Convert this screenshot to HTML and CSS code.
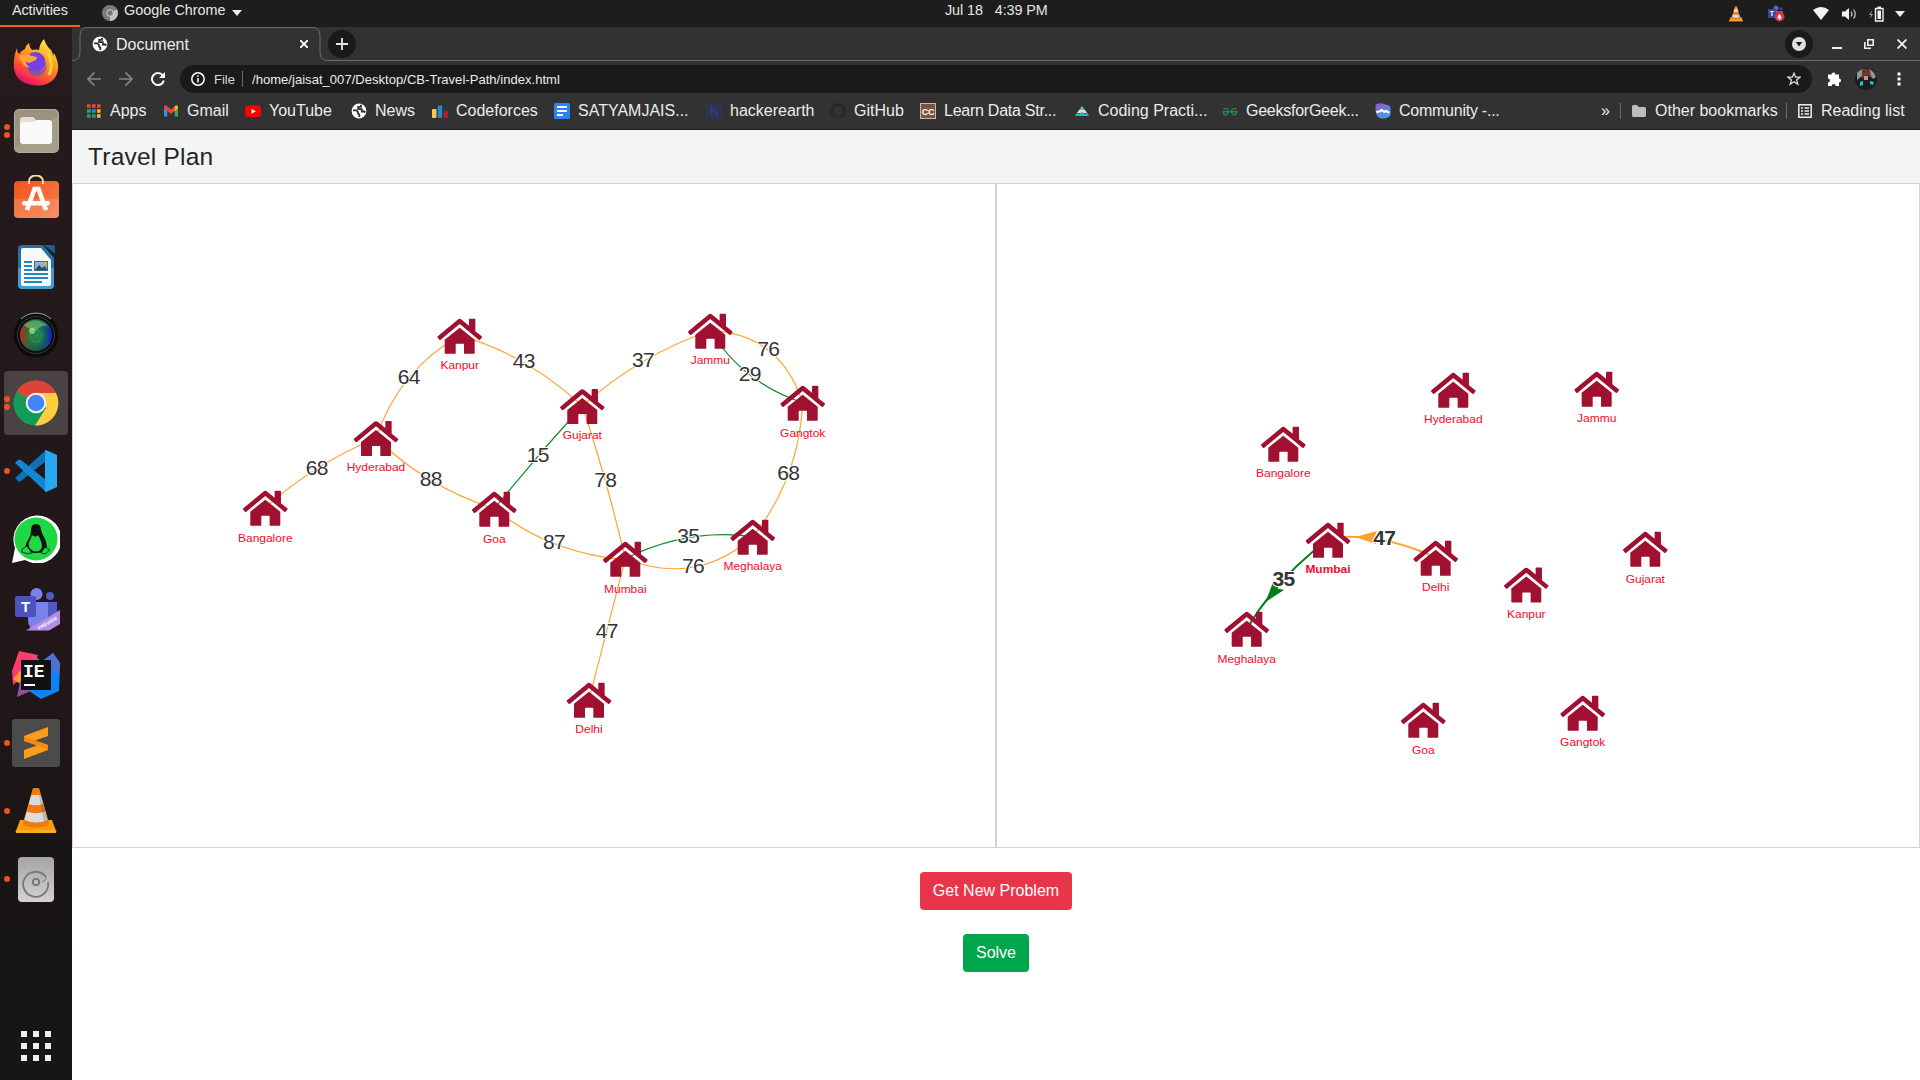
FILE: index.html
```html
<!DOCTYPE html>
<html lang="en">
<head>
<meta charset="utf-8">
<title>Document</title>
<link rel="stylesheet" href="styles.css">
</head>
<body>
<svg class="defs" aria-hidden="true">
  <defs>
    <symbol id="globe" viewBox="0 0 16 16"><circle cx="8" cy="8" r="7.4" fill="#fff"/><path d="M2 7.300h3.500L7 9v1.500l1.300 1V14M10 1.800v2H7.200V6.200h3.600v2.300h2.500l1 1" fill="none" stroke="#323232" stroke-width="1.800"/></symbol>
    <symbol id="cone" viewBox="0 0 48 48"><path d="M8 33h32l4 11q.5 2-1.5 2h-37q-2 0-1.5-2z" fill="#ff9a10"/><path d="M4 43h40l.3 1.500q0 1.500-1.800 1.500h-37q-2 0-1.800-1.500z" fill="#f7b01c"/><path d="M22 1h4q1 0 1.400 1L37 36q0 4.500-13 4.500T11 36L20.600 2q.4-1 1.400-1z" fill="#ee7a10"/><path d="M19.400 8h9.200l2.600 9q-7 2.500-14.400 0zM14.800 24.500q9 3.500 18.400 0L35.600 33q-11 5-23.200 0z" fill="#dcdcdc"/><path d="M27 8h1.600L35.600 33l-4 1.500z" fill="#555" opacity=".25"/></symbol>
    <symbol id="house" viewBox="-68 -2 136 110" overflow="visible"><path d="M-66 53-6 3Q0-2 6 3L28 21V2q0-2 2-2h15q2 0 2 2v36l19 15q2 2 0 4l-5 6q-2 2-4 0L0 16-57 63q-2 2-4 0l-5-6q-2-2 0-4zM0 27l45 36v40q0 2-2 2H13V77q0-2-2-2h-21q-2 0-2 2v28h-31q-2 0-2-2V63z" fill="#a01030"/></symbol>
    <linearGradient id="gFox" x1=".8" y1="0" x2=".3" y2="1"><stop offset="0" stop-color="#fff44f"/><stop offset=".4" stop-color="#ffa020"/><stop offset=".75" stop-color="#ff4638"/><stop offset="1" stop-color="#e5057c"/></linearGradient>
    <linearGradient id="gOr" x1="0" y1="0" x2="1" y2="1"><stop offset="0" stop-color="#f2521b"/><stop offset="1" stop-color="#f58350"/></linearGradient>
    <radialGradient id="gLens"><stop offset="0" stop-color="#1fa04a"/><stop offset=".55" stop-color="#1c6a50"/><stop offset="1" stop-color="#1a3a4c"/></radialGradient>
    <linearGradient id="gLens2"><stop offset="0" stop-color="#c8241c"/><stop offset=".3" stop-color="#2c7a2e" stop-opacity=".6"/><stop offset=".65" stop-color="#147a58" stop-opacity=".3"/><stop offset="1" stop-color="#0c1cd0"/></linearGradient>
    <linearGradient id="gDisk" x1="0" y1="0" x2="0" y2="1"><stop offset="0" stop-color="#a4a4a4"/><stop offset="1" stop-color="#d2d2d2"/></linearGradient>
    <linearGradient id="gCom" x1="0" y1="0" x2=".6" y2="1"><stop offset="0" stop-color="#9b4fd0"/><stop offset="1" stop-color="#3ca0e8"/></linearGradient>
  </defs>
</svg>

<header class="topbar">
  <div class="activities">Activities</div>
  <div class="appmenu">
    <svg width="16" height="16" viewBox="0 0 16 16"><circle cx="8" cy="8" r="8" fill="#7b7b7b"/><path d="M8 8 15 4.200A8 8 0 0 1 8 16z" fill="#c2c2c2"/><circle cx="8" cy="8" r="3.300" fill="#777" stroke="#ccc"/></svg>
    <span>Google Chrome</span>
    <svg class="caret" width="10" height="6" viewBox="0 0 10 6"><path d="M0 0h10L5 6z" fill="#eee"/></svg>
  </div>
  <div class="clock"><span>Jul 18</span><span>4:39 PM</span></div>
  <div class="tray">
    <svg width="16" height="16"><use href="#cone"/></svg>
    <svg class="t-teams" width="17" height="17" viewBox="0 0 17 17"><circle cx="8" cy="3" r="2.600" fill="#5a62c8"/><circle cx="13" cy="3.500" r="1.600" fill="#3c44a0"/><path d="M5 6h10v7H5z" fill="#5a62c8"/><rect y="4" width="8" height="9" fill="#3a43a8"/><text x="4" y="11" class="tray-t">T</text><circle cx="11.500" cy="11.500" r="5" fill="#d3304c"/><path d="M9 13.500q1-1 1-3a1.600 1.600 0 0 1 3 0q0 2 1 3zM10.800 14h1.500v1h-1.500z" fill="#fff"/></svg>
    <svg class="t-wifi" width="16" height="13" viewBox="0 0 16 13"><path d="M0 3Q8-3 16 3L8 13z" fill="#f2f2f2"/></svg>
    <svg class="t-vol" width="16" height="14" viewBox="0 0 16 14"><path d="M0 4.500h3L7 1v12L3 9.500H0z" fill="#f2f2f2"/><path d="M9 4.500q2 2.500 0 5M11.500 2.500q3.500 4.500 0 9" fill="none" stroke="#ccc" stroke-width="1.200"/></svg>
    <svg class="t-bat" width="15" height="16" viewBox="0 0 15 16"><path d="M3 4 0 9h2l-1 4 3-5H2z" fill="#999"/><path d="M6.500 2.500h7.500v12.500H6.500z" fill="none" stroke="#f2f2f2" stroke-width="1.400"/><path d="M8.500 4.500h3.500V13H8.500zM8.500.5h3.500v1.500H8.500z" fill="#f2f2f2"/></svg>
    <svg class="t-caret" width="10" height="6" viewBox="0 0 10 6"><path d="M0 0h10L5 6z" fill="#eee"/></svg>
  </div>
</header>

<div class="desktop">
  <nav class="dock">
    <div class="tile"><svg viewBox="0 0 48 48"><path d="M5 9q0 4 2 6Q10 11 13 10q1-4 4-6 0 4 3 7 4-1 7 0 1-7 5-11 2 7 7 11 2 3 2 6l1-3q5 9 4 17-3 15-20 15.500Q5 46 2 30 1 18 5 9z" fill="url(#gFox)"/><circle cx="23.500" cy="23" r="10" fill="#7a3fe0"/><path d="M14 24q4 10 14 8 6-2 5.500-9 2 5-1 10-5 6-12 3-6-4-6.500-12z" fill="#5058d0" opacity=".7"/><path d="M7 17q8-3 13 0l5 1-1 3-7 3-4-2q2 5 5 7-8-1-11-12z" fill="#ffa436"/><path d="M36 14q6 12 1 22" fill="none" stroke="#ffd040" stroke-width="3"/></svg></div>
    <div class="tile dots2"><svg viewBox="0 0 48 48"><rect x="2" y="2" width="45" height="44" rx="5" fill="#b4ad9a"/><rect x="3" y="3" width="43" height="42" rx="4" fill="#9b937f"/><path d="M3 41 46 9v32q0 4-4 4H7q-4 0-4-4z" fill="#a59e8a"/><path d="M8 13q0-3 3-3h9q3 0 4 4h14v16H8z" fill="#e2dfd8"/><path d="M8 18q0-3 3-3h10l4-2h12q3 0 3 3v18q0 3-3 3H11q-3 0-3-3z" fill="#fafafa"/></svg></div>
    <div class="tile"><svg viewBox="0 0 48 48"><rect x="2" y="6" width="45" height="37" rx="4" fill="url(#gOr)"/><path d="M2 24h45v15q0 4-4 4H6q-4 0-4-4z" fill="#fff" opacity=".12"/><path d="M17 9V6a7 5.500 0 0 1 14 0v3" fill="none" stroke="#fbd9a8" stroke-width="2"/><path d="M15 35 22.500 14h4L34 35" fill="none" stroke="#fff" stroke-width="4.500"/><rect x="10" y="26" width="28" height="4.500" rx="2" fill="#fff"/></svg></div>
    <div class="tile"><svg viewBox="0 0 48 48"><path d="M10 2h21l11 13v27q0 4-4 4H10q-4 0-4-4V6q0-4 4-4z" fill="#1f74a8"/><path d="M6 25h36v17q0 4-4 4H10q-4 0-4-4z" fill="#3f9dcb"/><path d="M11 5h18l10 12v24q0 2-2 2H11q-2 0-2-2V7q0-2 2-2z" fill="#f8f8f8"/><path d="M32 2h9q2 0 2 2v7z" fill="#1a5f90"/><path d="M12 19h8M12 23h8M12 27h8M12 31h24M12 35h24M12 39h18" stroke="#1f86c0" stroke-width="2"/><rect x="22.500" y="18.500" width="13" height="9" fill="#7fb8e0" stroke="#3a6a90"/><path d="m23 27 4-5 3 3 3-2 2 4z" fill="#444"/><path d="M31 19h4v3z" fill="#ffb400"/></svg></div>
    <div class="tile"><svg viewBox="0 0 48 48"><circle cx="24" cy="24" r="22.500" fill="#0c0c0c"/><path d="M9 8A22 22 0 0 1 39 8" fill="none" stroke="#a8a8a8" stroke-width="1"/><circle cx="24" cy="24" r="18.500" fill="none" stroke="#3a3a3a" stroke-width="1"/><circle cx="24" cy="24" r="16" fill="url(#gLens)"/><circle cx="24" cy="24" r="16" fill="url(#gLens2)"/><path d="M12 14q12-10 24 1-8-1-12 5-6-1-12-6z" fill="#8fdc7c" opacity=".5"/><circle cx="20" cy="20" r="3" fill="#d8f0b8" opacity=".6"/><circle cx="24" cy="25" r="6" fill="none" stroke="#46b85c" opacity=".5"/></svg></div>
    <div class="tile active dots2"><svg viewBox="0 0 48 48"><path d="M24 24 4.500 12.750A22.500 22.500 0 0 1 43.500 12.750z" fill="#db4437"/><path d="M24 24 4.500 12.750A22.500 22.500 0 0 0 24 46.500L34 30z" fill="#0f9d58"/><path d="M24 14h20A22.500 22.500 0 0 1 23 46.500L34 29z" fill="#ffcd40"/><path d="M4.500 12.750A22.500 22.500 0 0 1 44.200 14H24L14 29z" fill="#db4437"/><path d="M4.700 12.600 14.500 29l9.500-5z" fill="#0f9d58"/><circle cx="24" cy="24" r="10.300" fill="#f1f1f1"/><circle cx="24" cy="24" r="8.300" fill="#4285f4"/></svg></div>
    <div class="tile dot"><svg viewBox="0 0 48 48"><path d="m3 31 3 3q1.500 1 3 0L34 14V3z" fill="#0f70b3"/><path d="m3 16 3-3q1.500-1 3 0l25 20v12z" fill="#1087d0"/><path d="M34 3 45 8v32l-11 5q-1 .3-1-1V5q0-1.500 1-2z" fill="#28a8f0"/></svg></div>
    <div class="tile"><svg viewBox="0 0 48 48"><path d="M0 48 3 33A24 24 0 1 1 13 45z" fill="#fff"/><circle cx="24" cy="24" r="21.500" fill="#1fd744"/><path d="M19 15q0-6 5-6t5 6q1 4 4 9 3 7 1 12-4 2-10 2t-10-1q-2-6 2-12 3-4 3-10z" fill="#111"/><path d="M20 20q4 3 6 0 4 7 4 12-2 6-9 4-6-4-4-9 2-3 3-7z" fill="#1fd744"/><path d="m10 34 5-3 5 7q-4 2-10-1zM29 38l4-6 5 3-5 4z" fill="#1fd744" stroke="#111" stroke-width=".8"/></svg></div>
    <div class="tile"><svg viewBox="0 0 48 48"><circle cx="24.500" cy="11" r="6" fill="#7b83eb"/><circle cx="38" cy="13" r="4" fill="#5059c9"/><path d="M34 19h11v14q-1 8-9 8z" fill="#5059c9"/><path d="M16 19h20v16q-1 12-11 12-9 0-9-10z" fill="#7b83eb"/><rect x="3" y="13" width="21" height="21" rx="2" fill="#4b53bc"/><text x="13.500" y="29" class="ic-t">T</text><path d="M14 47.500 48 27v14L37 47.500z" fill="#b48ce4"/><text x="27" y="47" class="ic-prev" transform="rotate(-30 27 47)">PREVIEW</text></svg></div>
    <div class="tile"><svg viewBox="0 0 48 48"><path d="M7 0 26 4 20 20 1 34 0 20z" fill="#fe3a6e"/><path d="M1 28 10 18v16z" fill="#fc9a3a"/><path d="M8 30 5 46 28 36z" fill="#9a4c9c"/><path d="m20 3 10 8-8 4z" fill="#e05090"/><path d="m28 12 13-10 7 10-1 28-18 8-12-8z" fill="#0a84f8"/><path d="m28 12 13-10 7 10-1 12z" fill="#5070d0"/><rect x="9" y="9" width="30" height="30" fill="#111"/><text x="11" y="26" class="ic-ie">IE</text><path d="M12 33h11v2H12z" fill="#fff"/></svg></div>
    <div class="tile dot"><svg viewBox="0 0 48 48"><rect width="48" height="48" rx="3" fill="#4b4b4b"/><path d="M12 17 36 8v9l-13 4.500L36 26v5L12 40v-9l13-4.500L12 22z" fill="#ff9c1a"/><path d="m12 22 13 4.500 11 4V26l-13-4.500-11-4z" fill="#f28a0c"/></svg></div>
    <div class="tile dot"><svg viewBox="0 0 48 48"><use href="#cone"/></svg></div>
    <div class="tile dot"><svg viewBox="0 0 48 48"><rect x="6" y="2" width="36" height="45" rx="4" fill="url(#gDisk)"/><path d="M33.500 18.500A12.500 12.500 0 1 0 36 24" fill="none" stroke="#777" stroke-width="1.800" transform="translate(0 3)"/><path d="M30 27a6 6 0 0 0 4-6" fill="none" stroke="#777"/><circle cx="24" cy="27" r="3.200" fill="none" stroke="#777" stroke-width="1.800"/></svg></div>
    <svg class="grid" width="30" height="30" viewBox="0 0 30 30"><path d="M0 3h30M0 15h30M0 27h30" stroke="#f0efee" stroke-width="6" stroke-dasharray="6"/></svg>
  </nav>

  <div class="browser">
    <div class="tabstrip">
      <svg class="tabline" width="256" height="34" viewBox="0 0 256 34"><path d="M0 33.500q8 0 8-8V8.500q0-8 8-8h224q8 0 8 8v17q0 8 8 8" fill="none" stroke="#6c6c6c"/></svg>
      <div class="tab"><svg width="16" height="16"><use href="#globe"/></svg><span>Document</span><svg class="x" width="8" height="8" viewBox="0 0 8 8"><path d="m0 0 8 8M8 0 0 8" stroke="#fff" stroke-width="1.900"/></svg></div>
      <div class="round"><svg width="12" height="12" viewBox="0 0 12 12"><path d="M6 0v12M0 6h12" stroke="#e8e8e8" stroke-width="1.800"/></svg></div>
      <div class="winctl">
        <div class="round"><svg width="14" height="14" viewBox="0 0 14 14"><circle cx="7" cy="7" r="7" fill="#e0e0e0"/><path d="M3.800 5h6.400L7 9.500z" fill="#1a1a1a"/></svg></div>
        <svg class="min" width="10" height="10" viewBox="0 0 10 10"><path d="M0 9h10" stroke="#eee" stroke-width="2"/></svg>
        <svg class="res" width="10" height="10" viewBox="0 0 10 10"><path d="M3.800.8h5.400v5.400H3.800z" fill="none" stroke="#eee" stroke-width="1.600"/><path d="M.8 3v6.200H7" fill="none" stroke="#eee" stroke-width="1.600"/></svg>
        <svg class="cls" width="10" height="10" viewBox="0 0 10 10"><path d="m.5.5 9 9M9.500.5l-9 9" stroke="#eee" stroke-width="1.900"/></svg>
      </div>
    </div>
    <div class="toolbar">
      <svg class="nav" width="14" height="14" viewBox="0 0 14 14"><path d="M14 7H1M7.500.5 1 7l6.500 6.500" fill="none" stroke="#858585" stroke-width="1.700"/></svg>
      <svg class="nav" width="14" height="14" viewBox="0 0 14 14"><path d="M0 7h13M6.500.5 13 7l-6.500 6.500" fill="none" stroke="#858585" stroke-width="1.700"/></svg>
      <svg class="nav" width="14" height="14" viewBox="0 0 14 14"><path d="M11.600 3.200A6 6 0 1 0 12.800 8.500" fill="none" stroke="#fff" stroke-width="2"/><path d="M14 0v6H8z" fill="#fff"/></svg>
      <div class="omnibox">
        <svg width="14" height="14" viewBox="0 0 14 14"><circle cx="7" cy="7" r="6.200" fill="none" stroke="#fff" stroke-width="1.500"/><path d="M7 6v4.500M7 3.300v1.500" stroke="#fff" stroke-width="1.500"/></svg>
        <span class="scheme">File</span><i class="bar"></i><span class="url">/home/jaisat_007/Desktop/CB-Travel-Path/index.html</span>
        <svg class="star" width="14" height="14" viewBox="0 0 14 14"><path d="m7 1.200 1.700 4h4.300L9.600 7.900l1.200 4.400L7 9.700l-3.800 2.600 1.200-4.400L1 5.200h4.300z" fill="none" stroke="#ddd" stroke-width="1.300"/></svg>
      </div>
      <svg class="puz" width="16" height="16" viewBox="0 0 16 16"><path d="M1 3.500h3.500a2 2 0 1 1 4 0H12v4a2 2 0 1 1 0 4V15H8.700a2 2 0 1 0-4 0H1v-3.500a2 2 0 1 0 0-4z" fill="#fff"/></svg>
      <svg class="ava" width="22" height="22" viewBox="0 0 22 22"><circle cx="11" cy="11" r="11" fill="#1c1c20"/><path d="M2 5Q5 1 9 1L7 8 2 12zM14 1q5 2 7 8l-3 2-3-4z" fill="#8d969a"/><path d="M7 2q5-3 8 1l1 7-4-3-5 4z" fill="#6e3528"/><path d="M9 8h4v4H9z" fill="#b89890"/><path d="m5 14 3-1v4l-3 1zM15 13l4 1-1 3-3-1z" fill="#19c6d8"/></svg>
      <svg class="kebab" width="4" height="14" viewBox="0 0 4 14"><path d="M.5.5h3v3h-3zM.5 5.500h3v3h-3zM.5 10.500h3v3h-3z" fill="#fff"/></svg>
    </div>
    <div class="bookmarks">
      <a><svg viewBox="0 0 16 16"><path d="M1 3h14" stroke="#e8433a" stroke-width="3.600" stroke-dasharray="3.600 1.400"/><path d="M1 8h4" stroke="#1ea362" stroke-width="3.600"/><path d="M6 8h3.600" stroke="#1a8cf0" stroke-width="3.600"/><path d="M11 8h3.600" stroke="#ffb021" stroke-width="3.600"/><path d="M1 13h8.600" stroke="#1ea362" stroke-width="3.600" stroke-dasharray="3.600 1.400"/><path d="M11 13h3.600" stroke="#ffb021" stroke-width="3.600"/></svg>Apps</a>
      <a><svg viewBox="0 0 16 16"><path d="M1 4v9.500h3.300V7z" fill="#4285f4"/><path d="M15 4v9.500h-3.300V7z" fill="#34a853"/><path d="M1 5V3.500Q2 1.500 4 3l4 3.500L12 3q2-1.500 3 .5V5l-7 6z" fill="#ea4335"/><path d="M15 3.500V5.500l-3.300 2.800V3.300Q14 1.500 15 3.500z" fill="#fbbc04"/></svg>Gmail</a>
      <a><svg viewBox="0 0 16 16"><rect y="2.500" width="16" height="11.500" rx="3" fill="#f00"/><path d="m6.500 5.700 4.300 2.500-4.300 2.500z" fill="#fff"/></svg>YouTube</a>
      <a><svg><use href="#globe"/></svg>News</a>
      <a><svg viewBox="0 0 16 16"><rect y="6" width="4.500" height="9" rx="1" fill="#f6ca57"/><rect x="5.700" y="2.500" width="4.500" height="12.500" rx="1" fill="#1c8fca"/><rect x="11.500" y="8" width="4.500" height="7" rx="1" fill="#b01e26"/></svg>Codeforces</a>
      <a><svg viewBox="0 0 16 16"><rect width="16" height="16" rx="1.500" fill="#2684fc"/><path d="M3 4h10M3 8h10M3 12h6" stroke="#fff" stroke-width="1.800"/></svg>SATYAMJAIS...</a>
      <a><svg viewBox="0 0 16 16"><rect width="16" height="16" rx="2" fill="#2c3454"/><path d="M5.500 3v10M5.500 8q5-2 5 1v4" stroke="#35406c" stroke-width="1.600" fill="none"/></svg>hackerearth</a>
      <a><svg viewBox="0 0 16 16"><path d="M8 0a8 8 0 0 0-2.500 15.600c.4.100.5-.2.500-.4v-1.500c-2.200.5-2.700-1-2.700-1-.4-.9-.9-1.200-.9-1.200-.7-.5.100-.5.100-.5.800.1 1.200.8 1.200.8.700 1.300 1.900.9 2.300.7.100-.5.300-.9.500-1.100-1.800-.2-3.600-.9-3.600-4 0-.9.300-1.600.8-2.200-.100-.2-.4-1 .1-2.100 0 0 .7-.2 2.200.8a7.500 7.500 0 0 1 4 0c1.500-1 2.200-.8 2.200-.8.4 1.100.2 1.900.1 2.100.5.600.8 1.300.8 2.200 0 3.100-1.900 3.800-3.700 4 .3.300.6.800.6 1.500v2.200c0 .2.100.5.500.4A8 8 0 0 0 8 0z" fill="#24292e"/></svg>GitHub</a>
      <a class="tight"><svg viewBox="0 0 16 16"><rect x=".5" y=".5" width="15" height="15" fill="#7a5640" stroke="#c8b8ac"/><text x="8" y="11.500" class="ic-cc">CC</text></svg>Learn Data Str...</a>
      <a><svg viewBox="0 0 16 16"><path d="m8 3 3 4H5z" fill="#4fc3d0"/><path d="m5 7h6l2 3H3z" fill="#f8d8b0"/><path d="M3 9.500 1 13h14l-2-3.500-2 1.500-3-2-3 2z" fill="#22b8c8"/></svg>Coding Practi...</a>
      <a class="tight"><svg viewBox="0 0 16 16"><path d="M1.500 6Q6 4.500 6.500 8.500 6 12 3.800 12T1.200 8.800h13.600Q14.500 12 12.200 12T9.500 8.500Q10 4.500 14.500 6" fill="none" stroke="#1f8a4a" stroke-width="1.400"/></svg>GeeksforGeek...</a>
      <a class="tight"><svg viewBox="0 0 16 16"><path d="M1 1q6-2 11 1 3 0 3.500 3 .5 5-.5 8-3 3-8 2.500-4 0-6-5Q0 4 1 1z" fill="url(#gCom)"/><path d="M1.500 9.500q1-1 2.500-1t2-1 2 .5 2 .5q1-1 2 0t2.500 1" fill="none" stroke="#fff" stroke-width="2.200"/></svg>Community -...</a>
      <span class="more">»</span><i class="bar"></i>
      <a class="other"><svg viewBox="0 0 16 16"><path d="M1 3.500Q1 2 2.500 2H6l1.500 2h6Q15 4 15 5.500v7q0 1.500-1.500 1.500h-11Q1 14 1 12.500z" fill="#bdbdbd"/></svg>Other bookmarks</a>
      <i class="bar"></i>
      <a class="reading"><svg viewBox="0 0 16 16"><path d="M1.800 1.800h12.400v12.400H1.800z" fill="none" stroke="#eee" stroke-width="1.500"/><path d="M4 5h2M7.500 5H12M4 8h2M7.500 8H12M4 11h2M7.500 11H12" stroke="#eee" stroke-width="1.500"/></svg>Reading list</a>
    </div>

    <main class="page">
      <h4 class="title">Travel Plan</h4>
      <div class="panels">
        <svg class="panel" viewBox="73 184 922 663">
          <g class="edges">
            <path d="M376 438Q399.500 369.200 459.700 335.700"/>
            <path d="M459.700 335.700Q526.400 354.200 582.300 406"/>
            <path d="M265.300 507.700Q312.700 464.800 376 438"/>
            <path d="M376 438Q426.200 487 494.300 508.700"/>
            <path class="g" d="M582.300 406Q537 455.600 494.300 508.700"/>
            <path d="M582.300 406Q606.800 479.200 625.300 558.700"/>
            <path d="M494.300 508.700Q548.200 552.700 625.300 560"/>
            <path d="M582.300 406Q639.700 354.600 710.300 330.700"/>
            <path d="M710.300 330.700Q780.100 333.700 802.700 402.700"/>
            <path class="g" d="M710.300 330.700Q742.900 382.900 802.700 402.700"/>
            <path d="M802.700 402.700Q798.900 478.700 752.700 536.700"/>
            <path class="g" d="M625.300 558.700Q687.600 527.700 752.700 536.700"/>
            <path d="M625.300 558.700Q697 586.700 752.700 536.700"/>
            <path d="M625.300 558.700Q606.200 633.800 589 699.700"/>
          </g>
          <g class="weights">
            <text x="408.700" y="384">64</text><text x="523.700" y="368">43</text><text x="316.700" y="474.500">68</text><text x="430.700" y="486">88</text><text x="537.700" y="462">15</text><text x="605.300" y="486.500">78</text><text x="554" y="549">87</text><text x="643" y="367">37</text><text x="768.300" y="356">76</text><text x="749.700" y="380.500">29</text><text x="788.300" y="480">68</text><text x="688.300" y="543">35</text><text x="693" y="573">76</text><text x="606.700" y="638">47</text>
          </g>
          <g class="nodes">
            <g transform="translate(265.3 490.7)"><use href="#house" x="-22.670" y="-.67" width="45.330" height="36.670"/><text y="51.500">Bangalore</text></g>
            <g transform="translate(376 421)"><use href="#house" x="-22.670" y="-.67" width="45.330" height="36.670"/><text y="50">Hyderabad</text></g>
            <g transform="translate(459.7 318.7)"><use href="#house" x="-22.670" y="-.67" width="45.330" height="36.670"/><text y="50.500">Kanpur</text></g>
            <g transform="translate(582.3 389)"><use href="#house" x="-22.670" y="-.67" width="45.330" height="36.670"/><text y="50">Gujarat</text></g>
            <g transform="translate(494.3 491.7)"><use href="#house" x="-22.670" y="-.67" width="45.330" height="36.670"/><text y="51">Goa</text></g>
            <g transform="translate(710.3 313.7)"><use href="#house" x="-22.670" y="-.67" width="45.330" height="36.670"/><text y="50.500">Jammu</text></g>
            <g transform="translate(802.7 385.7)"><use href="#house" x="-22.670" y="-.67" width="45.330" height="36.670"/><text y="51">Gangtok</text></g>
            <g transform="translate(625.3 541.7)"><use href="#house" x="-22.670" y="-.67" width="45.330" height="36.670"/><text y="51">Mumbai</text></g>
            <g transform="translate(752.7 519.7)"><use href="#house" x="-22.670" y="-.67" width="45.330" height="36.670"/><text y="50.500">Meghalaya</text></g>
            <g transform="translate(589 682.7)"><use href="#house" x="-22.670" y="-.67" width="45.330" height="36.670"/><text y="50">Delhi</text></g>
          </g>
        </svg>
        <svg class="panel" viewBox="997 184 922 663">
          <g class="edges bold">
            <path d="M1435.700 557.700Q1386.700 535 1340 537"/>
            <path class="g" d="M1328 539.700Q1279.300 575.400 1246.700 628.700"/>
          </g>
          <path d="M1355 537 1377 531 1374 538 1376 544z" fill="#ffa226"/>
          <path d="M1265.500 602 1273.500 581 1276 588 1284 590z" fill="#007d14"/>
          <g class="weights heavy"><text x="1384.300" y="544.500">47</text><text x="1283.500" y="585.500">35</text></g>
          <g class="nodes">
            <g transform="translate(1453.3 372.7)"><use href="#house" x="-22.670" y="-.67" width="45.330" height="36.670"/><text y="50.500">Hyderabad</text></g>
            <g transform="translate(1596.7 371.7)"><use href="#house" x="-22.670" y="-.67" width="45.330" height="36.670"/><text y="50.500">Jammu</text></g>
            <g transform="translate(1283.3 426.7)"><use href="#house" x="-22.670" y="-.67" width="45.330" height="36.670"/><text y="50.500">Bangalore</text></g>
            <g transform="translate(1328 522.7)"><use href="#house" x="-22.670" y="-.67" width="45.330" height="36.670"/><text class="sel" y="50.500">Mumbai</text></g>
            <g transform="translate(1435.7 540.7)"><use href="#house" x="-22.670" y="-.67" width="45.330" height="36.670"/><text y="50.500">Delhi</text></g>
            <g transform="translate(1526.3 567.5)"><use href="#house" x="-22.670" y="-.67" width="45.330" height="36.670"/><text y="50.500">Kanpur</text></g>
            <g transform="translate(1645.3 531.7)"><use href="#house" x="-22.670" y="-.67" width="45.330" height="36.670"/><text y="51">Gujarat</text></g>
            <g transform="translate(1246.7 611.7)"><use href="#house" x="-22.670" y="-.67" width="45.330" height="36.670"/><text y="51">Meghalaya</text></g>
            <g transform="translate(1423.3 702.7)"><use href="#house" x="-22.670" y="-.67" width="45.330" height="36.670"/><text y="51">Goa</text></g>
            <g transform="translate(1582.7 695.7)"><use href="#house" x="-22.670" y="-.67" width="45.330" height="36.670"/><text y="50.500">Gangtok</text></g>
          </g>
        </svg>
      </div>
      <div class="actions">
        <button class="btn danger">Get New Problem</button>
        <button class="btn success">Solve</button>
      </div>
    </main>
  </div>
</div>
</body>
</html>
```
FILE: styles.css
```css
* { box-sizing: border-box; }
body { margin: 0; width: 1920px; height: 1080px; overflow: hidden; background: #fff; font-family: "Liberation Sans", Arial, sans-serif; display: flex; flex-direction: column; }
svg { display: block; flex: none; }
.defs { position: absolute; width: 0; height: 0; }

/* GNOME top bar */
.topbar { height: 27px; background: #1d1d1d; color: #e6e6e6; font-size: 14.400px; line-height: 21px; display: grid; grid-template-columns: 80px 865px 104px 1fr; flex: none; }
.activities { border-bottom: 2px solid #e9622c; padding-left: 12px; height: 27px; white-space: nowrap; letter-spacing: -.1px; }
.appmenu { display: flex; padding-left: 22px; gap: 6px; }
.appmenu svg:first-child { margin-top: 5px; }
.appmenu .caret { margin-top: 10px; }
.clock { display: flex; gap: 12px; white-space: nowrap; letter-spacing: -.1px; }
.tray { display: flex; align-items: center; padding-left: 679px; }
.t-teams { margin-left: 24px; }
.t-wifi { margin-left: 28px; }
.t-vol { margin-left: 13px; }
.t-bat { margin-left: 11px; }
.t-caret { margin-left: 11px; }
.tray-t { font: bold 7px "Liberation Sans", sans-serif; fill: #fff; text-anchor: middle; }

.desktop { flex: 1; display: flex; min-height: 0; }

/* dock */
.dock { width: 72px; flex: none; background: linear-gradient(#251b1c, #211718 60%, #161414 90%); display: flex; flex-direction: column; align-items: center; gap: 4px; padding: 4px 0 19px; }
.tile { position: relative; width: 64px; height: 64px; flex: none; display: grid; place-items: center; border-radius: 4px; }
.tile > svg { width: 48px; height: 48px; }
.tile.active { background: #4a4243; }
.tile.dot::before, .tile.dots2::before, .tile.dots2::after { content: ""; position: absolute; left: 0; top: 29px; width: 6px; height: 6px; border-radius: 50%; background: #e95420; }
.tile.dots2::before { top: 25px; }
.tile.dots2::after { top: 33px; }
.grid { margin-top: auto; }
.ic-t { font: bold 15px "Liberation Sans", sans-serif; fill: #fff; text-anchor: middle; }
.ic-prev { font: bold 4.600px "Liberation Sans", sans-serif; fill: #fff; }
.ic-ie { font: bold 18px "Liberation Mono", monospace; fill: #fff; }
.ic-cc { font: bold 9px "Liberation Sans", sans-serif; fill: #fff; text-anchor: middle; }

/* browser window */
.browser { flex: 1; display: flex; flex-direction: column; min-width: 0; background: #323232; color: #ececec; }
.tabstrip { height: 34px; display: flex; align-items: center; position: relative; background: linear-gradient(#6c6c6c, #6c6c6c) 256px 33px / 100% 1px no-repeat; font-size: 16px; flex: none; }
.tabline { position: absolute; left: 0; top: 0; }
.tab { width: 256px; display: flex; align-items: center; padding: 0 20px; gap: 8px; }
.tab span { padding-top: 1px; }
.tab .x { margin-left: auto; }
.round { width: 28px; height: 28px; border-radius: 50%; background: #1a1a1a; display: grid; place-items: center; }
.winctl { margin-left: auto; display: flex; align-items: center; padding-right: 13px; }
.min { margin-left: 19px; }
.res { margin-left: 22px; }
.cls { margin-left: 23px; }
.toolbar { height: 36px; display: flex; align-items: center; padding-left: 15px; flex: none; }
.nav { margin-right: 18px; }
.omnibox { width: 1632px; height: 28px; margin-left: -3px; border-radius: 14px; background: #1a1a1a; display: flex; align-items: center; padding: 0 11px; font-size: 13px; }
.scheme { margin-left: 9px; color: #dcdcdc; width: 22px; }
.url { letter-spacing: .04px; }
.bar { width: 1px; height: 16px; background: #6a6a6a; }
.omnibox .bar { margin: 0 9px 0 6px; }
.star { margin-left: auto; }
.puz { margin-left: 15px; }
.ava { margin-left: 12px; }
.kebab { margin-left: 20px; }
.bookmarks { height: 33px; flex: none; display: grid; grid-template-columns: 77px 82px 106px 81px 122px 152px 124px 90px 154px 148px 153px 226px 19px 11px 155px 11px auto; align-items: center; padding: 0 0 5px 14px; border-bottom: 1px solid #1e1e1e; font-size: 16px; white-space: nowrap; }
.bookmarks a { display: flex; align-items: center; gap: 8px; }
.bookmarks .tight { letter-spacing: -.25px; }
.bookmarks a svg { width: 16px; height: 16px; }

/* page */
.page { flex: 1; background: #fff; color: #212529; }
.title { margin: 0; height: 53px; background: #f4f4f4; padding: 12px 16px 0; font-size: 24.500px; letter-spacing: .22px; font-weight: 400; line-height: 29px; }
.panels { display: flex; height: 665px; }
.panel { width: 924px; height: 665px; border: 1px solid #d3d3d3; }
.edges path { fill: none; stroke: #ffa52f; stroke-width: 1.200; }
.edges .g { stroke: #128a26; }
.edges.bold path { stroke-width: 2; }
.edges.bold .g { stroke: #007d14; }
.weights text { font-size: 21px; letter-spacing: -.7px; fill: #343434; stroke: #fff; stroke-width: 2px; paint-order: stroke; text-anchor: middle; }
.weights.heavy text { font-weight: bold; }
.nodes text { font-size: 11.200px; fill: #f8082a; text-anchor: middle; transform: scaleX(1.07); }
.nodes .sel { font-weight: bold; }
.actions { display: flex; flex-direction: column; align-items: center; gap: 24px; padding-top: 24px; }
.btn { height: 38px; padding: 6px 12px; border: 1px solid transparent; border-radius: 4px; font: 16px/24px "Liberation Sans", Arial, sans-serif; color: #fff; }
.danger { background: #e9354a; }
.success { background: #00a64c; }
```
